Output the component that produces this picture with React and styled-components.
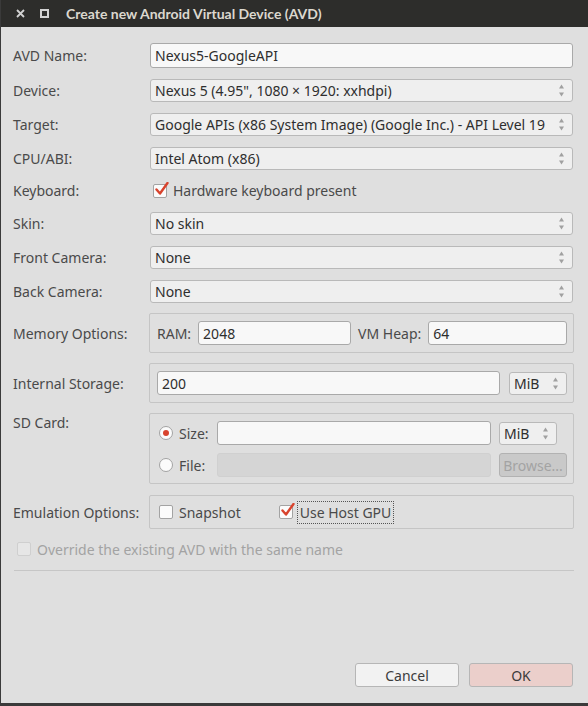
import React from "react";
import styled, { createGlobalStyle } from "styled-components";

const Global = createGlobalStyle`
  html, body { margin: 0; padding: 0; background: #dfdfdf; }
  body { font-family: "Noto Sans", "DejaVu Sans", sans-serif; font-size: 14px; color: #3c3c3c; }
  * { box-sizing: border-box; }
`;

const Window = styled.div`
  width: 588px;
  height: 706px;
  display: flex;
  flex-direction: column;
  background: #dfdfdf;
  border-left: 1px solid #3a3a3a;
  border-bottom: 3px solid #3a3a3a;
`;

const TitleBar = styled.div`
  height: 27px;
  flex: none;
  background: #2d2d2b;
  display: flex;
  align-items: center;
  padding-left: 15px;
`;

const TitleIcon = styled.svg`
  flex: none;
  display: block;
  margin-right: ${(p) => p.$mr}px;
`;

const TitleText = styled.div`
  color: #dcd8cf;
  font-family: Lato, "Noto Sans", sans-serif;
  font-weight: bold;
  font-size: 14px;
`;

const Body = styled.div`
  flex: 1;
  display: flex;
  flex-direction: column;
  padding: 0 14px 16px 12px;
`;

const Row = styled.div`
  display: grid;
  grid-template-columns: 136px 1fr;
  align-items: ${(p) => (p.$top ? "start" : "center")};
  height: ${(p) => p.$h}px;
  margin-top: ${(p) => p.$mt}px;
`;

const Label = styled.div`
  color: #4a4a4a;
  white-space: nowrap;
`;

const TextInput = styled.div`
  height: ${(p) => p.$h || 24}px;
  margin-left: ${(p) => p.$ml || 0}px;
  margin-right: ${(p) => p.$mr || 0}px;
  flex: ${(p) => (p.$grow ? 1 : "none")};
  background: ${(p) => (p.$disabled ? "#d5d5d5" : "#f8f8f8")};
  border: 1px solid ${(p) => (p.$disabled ? "#d0d0d0" : "#a9a9a9")};
  border-radius: 3px;
  padding: 0 4px;
  display: flex;
  align-items: center;
  color: #2e2e2e;
  min-width: 0;
`;

const Select = styled.div`
  height: ${(p) => p.$h || 23}px;
  width: ${(p) => (p.$w ? p.$w + "px" : "auto")};
  margin-left: ${(p) => p.$ml || 0}px;
  margin-right: ${(p) => p.$mr || 0}px;
  background: #efefef;
  border: 1px solid #b9b9b9;
  border-radius: 3px;
  padding: 0 8px 0 4px;
  display: flex;
  align-items: center;
  justify-content: space-between;
  color: #2e2e2e;
  white-space: nowrap;
`;

const Arrows = styled.svg`
  flex: none;
  display: block;
`;

const SpinArrows = () => (
  <Arrows width="5" height="13" viewBox="0 0 5 13">
    <path d="M2.5 0.5 L5 4.5 L0 4.5 Z" fill="#a0a0a0" />
    <path d="M0 8.5 L5 8.5 L2.5 12.5 Z" fill="#a0a0a0" />
  </Arrows>
);

const SelectBox = ({ children, ...rest }) => (
  <Select {...rest}>
    <span>{children}</span>
    <SpinArrows />
  </Select>
);

const CheckLine = styled.div`
  display: flex;
  align-items: center;
  gap: ${(p) => p.$gap || 6}px;
  color: ${(p) => (p.$muted ? "#a3a3a3" : "#4a4a4a")};
  margin-left: ${(p) => p.$ml || 0}px;
  white-space: nowrap;
`;

const Box = styled.div`
  position: relative;
  width: 14px;
  height: 14px;
  flex: none;
  background: ${(p) => (p.$muted ? "#e6e6e6" : "#fbfbfb")};
  border: 1px solid ${(p) => (p.$muted ? "#cfcfcf" : "#a3a3a3")};
  border-radius: 2px;
`;

const Tick = styled.svg`
  position: absolute;
  left: 1px;
  top: -3px;
`;

const CheckBox = ({ checked, muted }) => (
  <Box $muted={muted}>
    {checked && (
      <Tick width="14" height="14" viewBox="0 0 14 14">
        <path d="M1.5 7.5 L5 11.5 L12.5 1" stroke="#d8432d" strokeWidth="2.4" fill="none" strokeLinecap="round" strokeLinejoin="round" />
      </Tick>
    )}
  </Box>
);

const Radio = styled.div`
  width: 14px;
  height: 14px;
  flex: none;
  border-radius: 50%;
  background: #fbfbfb;
  border: 1px solid #a3a3a3;
  display: flex;
  align-items: center;
  justify-content: center;
  &::after {
    content: "";
    width: 6px;
    height: 6px;
    border-radius: 50%;
    background: ${(p) => (p.$on ? "#d8432d" : "transparent")};
  }
`;

const Group = styled.div`
  height: ${(p) => p.$h}px;
  border: 1px solid #c5c5c5;
  border-radius: 2px;
  padding: ${(p) => p.$pad};
  display: flex;
  align-items: center;
`;

const MemGroup = styled(Group)`
  display: grid;
  grid-template-columns: auto 153px auto 1fr;
  column-gap: 7px;
`;

const InnerLabel = styled.span`
  color: #4a4a4a;
  white-space: nowrap;
`;

const SdGroup = styled(Group)`
  display: grid;
  grid-template-columns: 14px 32px 1fr 70px;
  grid-template-rows: 24px 24px;
  column-gap: 6px;
  row-gap: 8px;
  align-items: center;
  align-content: start;
`;

const SdLast = styled.div`
  display: flex;
  padding-left: 2px;
`;

const Button = styled.div`
  height: 24px;
  width: ${(p) => p.$w}px;
  border: 1px solid ${(p) => (p.$disabled ? "#b2b2b2" : "#b6b6b6")};
  border-radius: 3px;
  background: ${(p) => p.$bg};
  color: ${(p) => (p.$disabled ? "#a3a3a3" : "#3c3c3c")};
  display: flex;
  align-items: center;
  justify-content: center;
  white-space: nowrap;
`;

const FocusText = styled.span`
  outline: 1px dotted #555;
  outline-offset: 1px;
  padding: 0 1px;
`;

const Separator = styled.div`
  height: 1px;
  background: #c6c6c6;
  margin: 11px 0 0 1px;
`;

const Spacer = styled.div`
  flex: 1;
`;

const ButtonBar = styled.div`
  display: flex;
  justify-content: flex-end;
  gap: 10px;
  margin-right: 1px;
`;

export default function App() {
  return (
    <>
      <Global />
      <Window>
        <TitleBar>
          <TitleIcon $mr={15} width="9" height="9" viewBox="0 0 9 9">
            <path d="M1 1 L8 8 M8 1 L1 8" stroke="#d2d2d2" strokeWidth="1.8" />
          </TitleIcon>
          <TitleIcon $mr={17} width="9" height="9" viewBox="0 0 9 9">
            <rect x="1" y="1" width="7" height="7" fill="none" stroke="#d2d2d2" strokeWidth="2" />
          </TitleIcon>
          <TitleText>Create new Android Virtual Device (AVD)</TitleText>
        </TitleBar>
        <Body>
          <Row $h={25} $mt={16}>
            <Label>AVD Name:</Label>
            <TextInput $ml={1} $mr={1} $h={25}>Nexus5-GoogleAPI</TextInput>
          </Row>
          <Row $h={23} $mt={11}>
            <Label>Device:</Label>
            <SelectBox $ml={1} $mr={1}>Nexus 5 (4.95", 1080 × 1920: xxhdpi)</SelectBox>
          </Row>
          <Row $h={23} $mt={11}>
            <Label>Target:</Label>
            <SelectBox $ml={1} $mr={1}>Google APIs (x86 System Image) (Google Inc.) - API Level 19</SelectBox>
          </Row>
          <Row $h={23} $mt={11}>
            <Label>CPU/ABI:</Label>
            <SelectBox $ml={1} $mr={1}>Intel Atom (x86)</SelectBox>
          </Row>
          <Row $h={21} $mt={10}>
            <Label>Keyboard:</Label>
            <CheckLine $ml={4} $gap={6}>
              <CheckBox checked />
              Hardware keyboard present
            </CheckLine>
          </Row>
          <Row $h={23} $mt={11}>
            <Label>Skin:</Label>
            <SelectBox $ml={1} $mr={1}>No skin</SelectBox>
          </Row>
          <Row $h={23} $mt={11}>
            <Label>Front Camera:</Label>
            <SelectBox $ml={1} $mr={1}>None</SelectBox>
          </Row>
          <Row $h={23} $mt={11}>
            <Label>Back Camera:</Label>
            <SelectBox $ml={1} $mr={1}>None</SelectBox>
          </Row>
          <Row $h={40} $mt={10}>
            <Label>Memory Options:</Label>
            <MemGroup $h={40} $pad="0 6px 0 7px">
              <InnerLabel>RAM:</InnerLabel>
              <TextInput $h={24}>2048</TextInput>
              <InnerLabel>VM Heap:</InnerLabel>
              <TextInput $h={24}>64</TextInput>
            </MemGroup>
          </Row>
          <Row $h={40} $mt={10}>
            <Label>Internal Storage:</Label>
            <Group $h={40} $pad="0 6px 0 7px">
              <TextInput $h={24} $mr={9} $grow>200</TextInput>
              <SelectBox $w={58} $h={23}>MiB</SelectBox>
            </Group>
          </Row>
          <Row $h={71} $mt={10} $top>
            <Label>SD Card:</Label>
            <SdGroup $h={71} $pad="7px 6px 0 9px">
              <Radio $on />
              <InnerLabel>Size:</InnerLabel>
              <TextInput $h={24}></TextInput>
              <SdLast>
                <SelectBox $w={58} $h={23}>MiB</SelectBox>
              </SdLast>
              <Radio />
              <InnerLabel>File:</InnerLabel>
              <TextInput $h={24} $disabled></TextInput>
              <SdLast>
                <Button $w={70} $bg="#c9c9c9" $disabled>Browse...</Button>
              </SdLast>
            </SdGroup>
          </Row>
          <Row $h={34} $mt={11}>
            <Label>Emulation Options:</Label>
            <Group $h={34} $pad="0 6px 0 9px">
              <CheckLine $gap={6}>
                <CheckBox />
                Snapshot
              </CheckLine>
              <CheckLine $gap={6} $ml={38}>
                <CheckBox checked />
                <FocusText>Use Host GPU</FocusText>
              </CheckLine>
            </Group>
          </Row>
          <Row $h={20} $mt={10}>
            <CheckLine $muted $ml={4} $gap={6}>
              <CheckBox muted />
              Override the existing AVD with the same name
            </CheckLine>
          </Row>
          <Separator />
          <Spacer />
          <ButtonBar>
            <Button $w={104} $bg="#f2f2f2">Cancel</Button>
            <Button $w={104} $bg="#ebcfcb">OK</Button>
          </ButtonBar>
        </Body>
      </Window>
    </>
  );
}
